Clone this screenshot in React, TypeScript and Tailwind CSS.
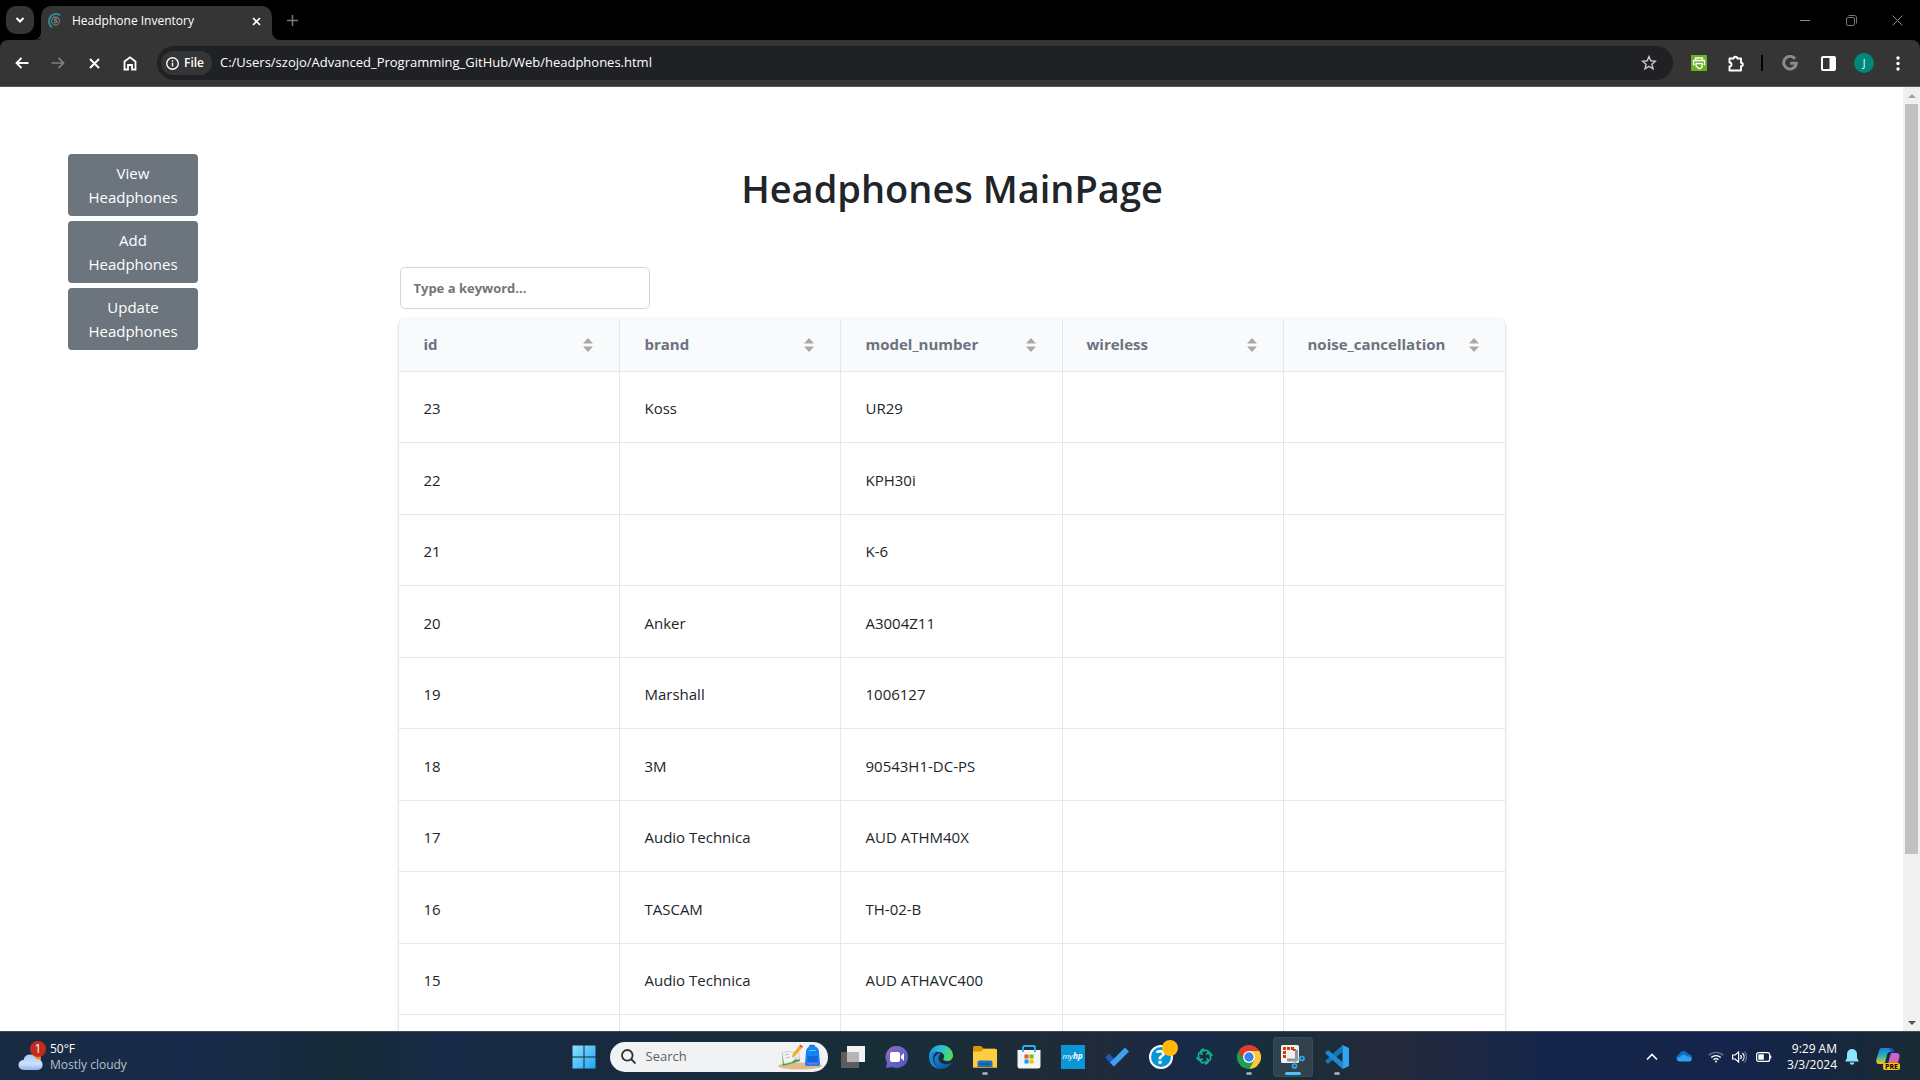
import React from "react";

type Headphone = { id: number; brand: string; model: string };

const columns = ["id", "brand", "model_number", "wireless", "noise_cancellation"];

const rows: Headphone[] = [
  { id: 23, brand: "Koss", model: "UR29" },
  { id: 22, brand: "", model: "KPH30i" },
  { id: 21, brand: "", model: "K-6" },
  { id: 20, brand: "Anker", model: "A3004Z11" },
  { id: 19, brand: "Marshall", model: "1006127" },
  { id: 18, brand: "3M", model: "90543H1-DC-PS" },
  { id: 17, brand: "Audio Technica", model: "AUD ATHM40X" },
  { id: 16, brand: "TASCAM", model: "TH-02-B" },
  { id: 15, brand: "Audio Technica", model: "AUD ATHAVC400" },
];

function TabStrip() {
  return (
    <div className="flex h-10 shrink-0 items-start bg-black pl-1.5 pt-1.5 text-white">
      <button aria-label="Search tabs" className="flex size-7 items-center justify-center rounded-[10px] bg-[#353535]">
        <svg width="10" height="8" viewBox="0 0 10 8" fill="none" stroke="#fff" strokeWidth="2"><path d="M1.5 2 5 5.5 8.500 2" /></svg>
      </button>
      <div className="flex h-[34px] items-end">
        <svg width="7" height="8" viewBox="0 0 8 8" fill="#353535"><path d="M8 0v8H0a8 8 0 0 0 8-8z" /></svg>
        <div className="flex h-full w-[231px] items-center rounded-t-[10px] bg-[#353535] pb-1 pl-1.5">
          <svg width="16" height="18" viewBox="0 0 16 18" fill="none">
            <path d="M13.500 3.300A7 7 0 1 0 5 15.300" stroke="#2d8a91" strokeWidth="2" />
            <circle cx="8.500" cy="9" r="4" stroke="#6f7476" strokeWidth="1.300" />
            <path d="M10 7.500c-1-1-3-.6-2.800.5s2.800.7 2.800 1.800-2 1.300-3 .2" stroke="#7d8285" strokeWidth="1.200" />
          </svg>
          <span className="ml-[9px] grow text-xs">Headphone Inventory</span>
          <button aria-label="Close tab" className="mr-2 flex size-4 items-center justify-center">
            <svg width="9" height="9" viewBox="0 0 9 9" stroke="#fff" strokeWidth="1.700"><path d="m1 1 7 7M8 1 1 8" /></svg>
          </button>
        </div>
        <svg width="8" height="8" viewBox="0 0 8 8" fill="#353535"><path d="M0 0v8h8a8 8 0 0 1-8-8z" /></svg>
      </div>
      <button aria-label="New tab" className="flex h-7 w-6 items-center justify-center">
        <svg width="11" height="11" viewBox="0 0 11 11" stroke="#7a7a7a" strokeWidth="1.500"><path d="M5.500 0v11M0 5.500h11" /></svg>
      </button>
      <div className="ml-auto flex h-7">
        <button aria-label="Minimize" className="flex w-[46px] items-center justify-center">
          <svg width="10" height="10" viewBox="0 0 10 10" stroke="#8a8a8a"><path d="M0 5.500h10" /></svg>
        </button>
        <button aria-label="Restore" className="flex w-[46px] items-center justify-center">
          <svg width="11" height="11" viewBox="0 0 11 11" fill="none" stroke="#777"><rect x=".5" y="2.500" width="8" height="8" rx="1.500" /><path d="M2.500.5H8.500a2 2 0 0 1 2 2V8.500" /></svg>
        </button>
        <button aria-label="Close" className="flex w-[46px] items-center justify-center">
          <svg width="11" height="11" viewBox="0 0 11 11" stroke="#8a8a8a"><path d="m.5.5 10 10M10.500.5l-10 10" /></svg>
        </button>
      </div>
    </div>
  );
}

function Toolbar() {
  return (
    <div className="bg-black">
      <div className="flex h-[47px] shrink-0 items-center rounded-t-lg border-b border-[#5a5a5a] bg-[#353535] text-white">
        <div className="flex w-[157px] shrink-0 items-center pl-1">
          <button aria-label="Back" className="flex h-8 w-9 items-center justify-center">
            <svg width="14" height="12" viewBox="0 0 14 12" fill="none" stroke="#fff" strokeWidth="1.900"><path d="M6.500.8 1.500 6l5 5.200M1.500 6h12" /></svg>
          </button>
          <button aria-label="Forward" className="flex h-8 w-9 items-center justify-center">
            <svg width="14" height="12" viewBox="0 0 14 12" fill="none" stroke="#808080" strokeWidth="1.700"><path d="M7.500.8 12.500 6l-5 5.200M12.500 6H.5" /></svg>
          </button>
          <button aria-label="Stop loading" className="flex h-8 w-9 items-center justify-center">
            <svg width="11" height="11" viewBox="0 0 11 11" stroke="#fff" strokeWidth="2"><path d="m1 1 9 9M10 1l-9 9" /></svg>
          </button>
          <button aria-label="Home" className="flex h-8 w-9 items-center justify-center">
            <svg width="14" height="15" viewBox="0 0 14 15" fill="none" stroke="#fff" strokeWidth="1.800"><path d="M1.500 5.500 7 1.300l5.500 4.200v8H9V9H5v4.500H1.500z" /></svg>
          </button>
        </div>
        <div className="flex h-[34px] grow items-center rounded-full bg-[#202124] pl-1 pr-4">
          <button className="flex h-6 items-center gap-[5px] rounded-full bg-[#353535] pl-[5px] pr-2 text-xs font-semibold">
            <svg width="13" height="13" viewBox="0 0 14 14" fill="none" stroke="#fff" strokeWidth="1.500"><circle cx="7" cy="7" r="6.200" /><path d="M7 6.200v4M7 3.500v1.600" /></svg>
            File
          </button>
          <input
            aria-label="Address"
            className="ml-2 min-w-0 grow bg-transparent text-[13px] outline-none"
            defaultValue="C:/Users/szojo/Advanced_Programming_GitHub/Web/headphones.html"
          />
          <button aria-label="Bookmark this page">
            <svg width="16" height="16" viewBox="0 0 16 16" fill="none" stroke="#c7c7c7" strokeWidth="1.400"><path d="m8 1.500 1.800 4.300 4.700.4-3.600 3 1.100 4.600L8 11.300l-4 2.500 1.100-4.600-3.600-3 4.700-.4z" /></svg>
          </button>
        </div>
        <div className="flex shrink-0 items-center pl-2">
          <button aria-label="Print extension" className="flex w-9 items-center justify-center">
            <svg width="16" height="16" viewBox="0 0 16 16" fill="none" stroke="#fff" strokeWidth="1.300"><rect width="16" height="16" fill="#6ab01f" stroke="none" /><path d="M4.500 5V3h7v2M3.500 9.500h-1v-4h11v4h-1M5 8.500h6v3.500l-1.500 1.500H8L5 11z" /></svg>
          </button>
          <button aria-label="Extensions" className="flex w-[38px] items-center justify-center">
            <svg width="17" height="17" viewBox="0 0 17 17" fill="none" stroke="#fff" strokeWidth="1.900"><path d="M1.500 3.500h4.200a1.800 1.800 0 0 1 3.600 0H13v4.200a1.800 1.800 0 0 1 0 3.600V15.500H1.500v-4a2 2 0 0 0 0-4z" strokeLinejoin="round" /></svg>
          </button>
          <div className="ml-1.5 mr-[9px] h-4 w-0.5 bg-black" />
          <button aria-label="Google" className="flex w-9 items-center justify-center">
            <svg width="16" height="16" viewBox="0 0 16 16" fill="none" stroke="#8b8b8b" strokeWidth="3"><path d="M13 3.800A6.300 6.300 0 1 0 14.300 8.300H8.200" /></svg>
          </button>
          <button aria-label="Side panel" className="flex w-10 items-center justify-center">
            <svg width="15" height="15" viewBox="0 0 15 15"><rect x="1" y="1" width="13" height="13" rx="1" fill="none" stroke="#fff" strokeWidth="2" /><path d="M8.500 1H14v13H8.500z" fill="#fff" /></svg>
          </button>
          <button aria-label="Profile" className="mx-1.5 flex size-5 items-center justify-center rounded-full bg-[#00897b] text-[10px]">J</button>
          <button aria-label="Menu" className="mr-1 flex w-9 items-center justify-center">
            <svg width="4" height="15" viewBox="0 0 4 15" fill="#fff"><circle cx="2" cy="2" r="1.700" /><circle cx="2" cy="7.500" r="1.700" /><circle cx="2" cy="13" r="1.700" /></svg>
          </button>
        </div>
      </div>
    </div>
  );
}

function SideButton({ label }: { label: string }) {
  return (
    <button className="w-full rounded bg-[#6c757d] px-3 py-[7px] text-[15px] leading-6 text-white">
      {label}
      <br />
      Headphones
    </button>
  );
}

function Page() {
  return (
    <div className="flex min-h-0 grow bg-white">
      <div className="grid min-w-0 grow grid-cols-24 overflow-hidden">
        <nav className="col-span-5 flex flex-col items-start pl-[68px] pt-[67px]">
          <div className="flex w-[130px] flex-col gap-[5px]">
            <SideButton label="View" />
            <SideButton label="Add" />
            <SideButton label="Update" />
          </div>
        </nav>
        <main className="col-span-14 px-px pl-0.5 text-[#212529]">
          <h1 className="pt-[77px] text-center text-[38px] leading-[48px] font-semibold">Headphones MainPage</h1>
          <input
            type="search"
            aria-label="Type a keyword..."
            placeholder="Type a keyword..."
            className="mt-[55px] ml-0.5 block h-[42px] w-[250px] rounded-[5px] border border-[#d2d6dc] px-3 text-[13px] font-bold outline-none placeholder:text-[#757575]"
          />
          <div className="mt-[9px] overflow-hidden rounded-t-lg border border-b-0 border-[#e5e7eb] border-t-[#f3f4f6] shadow-sm">
            <table className="w-full table-fixed border-separate border-spacing-0 text-left">
              <thead>
                <tr className="h-[53px] bg-[#f9fafb]">
                  {columns.map((name) => (
                    <th key={name} className="border-r border-b border-[#e5e7eb] px-6 pb-0.5 text-[15px] leading-6 font-bold text-[#6b7280] last:border-r-0">
                      <div className="flex items-center justify-between">
                        {name}
                        <button aria-label={"Sort by " + name} className="flex h-6 w-3.5 items-center justify-center pt-0.5">
                          <svg width="10" height="14" viewBox="0 0 10 14" fill="#a9a9a9"><path d="M5 0 10 5.500H0zM0 8.500h10L5 14z" /></svg>
                        </button>
                      </div>
                    </th>
                  ))}
                </tr>
              </thead>
              <tbody>
                {rows.map((row) => (
                  <tr key={row.id} className="h-[71px] text-[15px] leading-6 even:h-[72px]">
                    {[row.id, row.brand, row.model, "", ""].map((value, i) => (
                      <td key={i} className="border-r border-b border-[#e5e7eb] px-6 pt-0.5 last:border-r-0">{value}</td>
                    ))}
                  </tr>
                ))}
                <tr className="h-[71px]">
                  {columns.map((name) => (
                    <td key={name} className="border-r border-[#e5e7eb] last:border-r-0" />
                  ))}
                </tr>
              </tbody>
            </table>
          </div>
        </main>
      </div>
      <div className="flex w-[17px] shrink-0 flex-col items-center bg-[#f0f0f0]" role="scrollbar" aria-controls="root" aria-valuenow={0}>
        <div className="flex h-[17px] shrink-0 items-center"><svg width="8" height="4" viewBox="0 0 8 4" fill="#a0a0a0"><path d="M4 0 8 4H0z" /></svg></div>
        <div className="h-[79.5%] w-[13px] bg-[#c1c1c1]" />
        <div className="mt-auto flex h-[17px] shrink-0 items-center"><svg width="8" height="4" viewBox="0 0 8 4" fill="#505050"><path d="M0 0h8L4 4z" /></svg></div>
      </div>
    </div>
  );
}

function TaskButton({ label, open, active, children }: { label: string; open?: boolean; active?: boolean; children: React.ReactNode }) {
  return (
    <button aria-label={label} className={"relative flex size-10 items-center justify-center rounded " + (active ? "bg-white/10 ring-1 ring-white/5 ring-inset" : "")}>
      {children}
      {open && <span className="absolute bottom-0.5 h-[3px] w-1.5 rounded-full bg-[#9aa0a6]" />}
      {active && <span className="absolute bottom-0.5 h-[3px] w-4 rounded-full bg-[#4cc2ff]" />}
    </button>
  );
}

function TaskbarApps() {
  return (
    <div className="flex items-center">
      <TaskButton label="Start">
        <svg width="24" height="24" viewBox="0 0 24 24">
          <defs><linearGradient id="win" x1="0" y1="0" x2="1" y2="1" gradientUnits="objectBoundingBox"><stop stopColor="#8be3fd" /><stop offset="1" stopColor="#1ea5f5" /></linearGradient></defs>
          <path d="M.5.5h11v11H.5zM12.500.5h11v11h-11zM.5 12.500h11v11H.5zM12.500 12.500h11v11h-11z" fill="url(#win)" />
        </svg>
      </TaskButton>
      <label className="mr-[5px] ml-1.5 flex h-[30px] w-[218px] items-center rounded-full bg-[#f1f2f4] pr-1.5 pl-[11px]">
        <svg width="15" height="15" viewBox="0 0 15 15" fill="none" stroke="#2f3133" strokeWidth="1.800"><circle cx="6.300" cy="6.300" r="5.300" /><path d="m10 10 4.500 4.500" /></svg>
        <input aria-label="Search" placeholder="Search" className="ml-2.5 w-0 grow bg-transparent text-[13px] text-[#333] outline-none placeholder:text-[#5f6062]" />
        <svg width="44" height="26" viewBox="0 0 44 26">
          <ellipse cx="22" cy="22" rx="22" ry="3.500" fill="#e2b98b" />
          <path d="m4 10 8-2 2 2 6-3 2 10-17 5z" fill="#3f9d52" />
          <path d="m4 9 8-2 2 2 6-3 2 9-6 1-2 2-8 2z" fill="#f4f4f2" stroke="#b5b8b4" strokeWidth=".6" />
          <path d="m7 11 4-1m-3 4 4-1m3-1 4-2m-3 5 4-2" stroke="#aaa" strokeWidth=".8" />
          <path d="m21 2 3 2-8 9-2 .5.500-3z" fill="#f9a72b" /><path d="m21 2 1.500-1.500 2.500 2L24 4z" fill="#e84a4a" />
          <path d="M31 2.500a4 3 0 0 1 6 0" fill="none" stroke="#1367c5" strokeWidth="1.500" />
          <path d="M28 8c0-8 13-8 13 0l1 12c0 2-1 2-2 2H29c-1 0-2 0-2-2z" fill="#1684ee" />
          <path d="M29.500 12h10v6h-10z" fill="#1465d6" /><path d="M29 19.500h11" stroke="#8a62e8" strokeWidth="1.500" /><path d="M31 6.500h7" stroke="#5cc8ff" />
        </svg>
      </label>
      <div className="flex gap-1">
        <TaskButton label="Task view">
          <svg width="24" height="22" viewBox="0 0 24 22"><path d="M6 0h18v16H6z" fill="#f2f2f2" /><path d="M0 6h18v16H0z" fill="#5d5d5d" /><path d="M6 6h12v10H6z" fill="#b5b5b5" /></svg>
        </TaskButton>
        <TaskButton label="Chat">
          <svg width="24" height="24" viewBox="0 0 24 24">
            <defs><linearGradient id="chat" x1="0" y1="0" x2="1" y2="1"><stop stopColor="#9a6db8" /><stop offset=".5" stopColor="#6a62c8" /><stop offset="1" stopColor="#5553b8" /></linearGradient></defs>
            <path d="M12 1a11 11 0 1 1-4.500 21L1 23l1-5.500A11 11 0 0 1 12 1z" fill="url(#chat)" />
            <rect x="5" y="7" width="10" height="10" rx="2" fill="#fff" /><path d="m16 11 3-3v8l-3-3z" fill="#fff" />
          </svg>
        </TaskButton>
        <TaskButton label="Microsoft Edge">
          <svg width="24" height="24" viewBox="0 0 24 24">
            <defs>
              <linearGradient id="edge-top" x1="0" y1=".4" x2="1" y2=".6"><stop stopColor="#1c9be8" /><stop offset=".5" stopColor="#2bc3d2" /><stop offset="1" stopColor="#5bdc4a" /></linearGradient>
              <linearGradient id="edge-low" x1="0" y1="0" x2="1" y2="1"><stop stopColor="#1a86d9" /><stop offset="1" stopColor="#0c4f9e" /></linearGradient>
            </defs>
            <path d="M0 11C.5 4.500 5.500 0 12 0c7 0 12 5 12 10.500 0 3.500-2.500 5.500-5.500 5.500-3 0-5-1-4-2.500C16 11 14.500 7 10 7 5 7 1 9 0 13z" fill="url(#edge-top)" />
            <path d="M0 12c1-5 5.500-6 9-6-4 2-5 5-5 8 0 5 4 9 8 10C5 24 0 19 0 12z" fill="#1589dc" />
            <path d="M10.500 8C6 10 4.500 13 5.500 17c1 4 5 7 8 6.800 4-.3 7-2.800 9-5.800-5 2.500-13 1-13-5 0-2 1-3 2-4z" fill="url(#edge-low)" />
          </svg>
        </TaskButton>
        <TaskButton label="File Explorer" open>
          <svg width="24" height="22" viewBox="0 0 24 22"><path d="M0 1.500Q0 0 1.500 0H8l2.500 2.500H22V8H0z" fill="#dc9507" /><path d="M0 5.500h8l2.500-2.500H23a1 1 0 0 1 1 1V21H0z" fill="#fdcc45" /><path d="M4.500 21v-4.500a2 2 0 0 1 2-2h11a2 2 0 0 1 2 2V21z" fill="#1673c8" /><path d="M7 18h10" stroke="#0d5496" strokeWidth="1.500" /><path d="M0 21.500h24" stroke="#dc9507" /></svg>
        </TaskButton>
        <TaskButton label="Microsoft Store">
          <svg width="24" height="24" viewBox="0 0 24 24"><path d="M.5 5h23v16a2.500 2.500 0 0 1-2.500 2.500H3A2.500 2.500 0 0 1 .5 21z" fill="#f3f4f5" /><path d="M6 7V2.500A1.500 1.500 0 0 1 7.500 1h9A1.500 1.500 0 0 1 18 2.500V7" fill="none" stroke="#2cb1f2" strokeWidth="1.800" /><path d="M7.500 9.500h4v4h-4z" fill="#f25022" /><path d="M12.500 9.500h4v4h-4z" fill="#7fba00" /><path d="M7.500 14.500h4v4h-4z" fill="#00a4ef" /><path d="M12.500 14.500h4v4h-4z" fill="#ffb900" /></svg>
        </TaskButton>
        <TaskButton label="myHP">
          <span className="flex size-6 items-center justify-center bg-[#0a96d6] text-[8px] text-white italic">my<b>hp</b></span>
        </TaskButton>
        <TaskButton label="To Do">
          <svg width="24" height="20" viewBox="0 0 24 20"><path d="m0 10.500 4-4 8.500 8.500-4 4.500z" fill="#1d57b8" /><path d="M20 .5 24 4.500 9 19.500l-4-4z" fill="#3ea0ee" /></svg>
        </TaskButton>
        <TaskButton label="HP Support Assistant">
          <span className="flex size-6 items-center justify-center rounded-full border-2 border-white bg-[#0a96d6] text-xl leading-none font-bold text-white">?</span>
          <span className="absolute top-[3px] right-[3px] size-4 rounded-full bg-[#ffb90a]" />
        </TaskButton>
        <TaskButton label="Sync">
          <svg width="17" height="17" viewBox="0 0 17 17" fill="none" stroke="#12b886" strokeWidth="1.600" strokeLinecap="round">
            <path d="M7.500 1C4 2 4 5 6 6.300M7 3c4-1.500 6.500 0 6 3" />
            <path d="M7.500 1C4 2 4 5 6 6.300M7 3c4-1.500 6.500 0 6 3" transform="rotate(90 8.500 8.500)" />
            <path d="M7.500 1C4 2 4 5 6 6.300M7 3c4-1.500 6.500 0 6 3" transform="rotate(180 8.500 8.500)" />
            <path d="M7.500 1C4 2 4 5 6 6.300M7 3c4-1.500 6.500 0 6 3" transform="rotate(270 8.500 8.500)" />
          </svg>
        </TaskButton>
        <TaskButton label="Google Chrome" open>
          <svg width="24" height="24" viewBox="0 0 24 24">
            <path d="M12 6h10.400A12 12 0 0 1 12 24l5.200-9z" fill="#fcc934" /><path d="M6.800 15 1.600 6A12 12 0 0 0 12 24l5.200-9z" fill="#1e9e50" /><path d="M1.600 6A12 12 0 0 1 22.400 6H12l-5.200 9z" fill="#e33b2e" />
            <circle cx="12" cy="12" r="6" fill="#fff" /><circle cx="12" cy="12" r="4.700" fill="#3b82ec" />
          </svg>
        </TaskButton>
        <TaskButton label="Snipping Tool" active>
          <svg width="25" height="24" viewBox="0 0 25 24"><rect x="1" width="18" height="18" rx="1.500" fill="#f1f1f1" /><path d="M4.500 13V3.500h10V6" fill="none" stroke="#d83b01" strokeWidth="3" strokeDasharray="3 1" /><path d="M16.500 5v10M7 15h9" stroke="#8e9499" strokeWidth="3" /><path d="m14 18 6-5" stroke="#aaafb4" strokeWidth="2" /><circle cx="14.500" cy="21" r="2" fill="none" stroke="#29a9ea" strokeWidth="1.700" /><circle cx="22" cy="13.500" r="2" fill="none" stroke="#29a9ea" strokeWidth="1.700" /></svg>
        </TaskButton>
        <TaskButton label="Visual Studio Code" open>
          <svg width="24" height="24" viewBox="0 0 24 24"><path d="M17.500 0v7L3 19l-3-3z" fill="#1276b9" /><path d="m0 8 3-3 14.500 12v7z" fill="#1a8ad4" /><path d="M17.500 0 24 3v18l-6.500 3z" fill="#2fa6f0" /></svg>
        </TaskButton>
      </div>
    </div>
  );
}

function Taskbar() {
  return (
    <footer className="grid h-[49px] shrink-0 grid-cols-[1fr_auto_1fr] items-center border-t border-[#3c4a5c] bg-[linear-gradient(to_right,#182b42,#182a4a_10%,#162a38_18%,#172a46_23%,#172a40_30%,#172e38_45%,#202a38_57%,#182a4a_62%,#182e38_67%,#25293a_72%,#16264a_80%,#14244a_91%,#1a2a34)] pt-px text-xs text-white">
      <button className="flex items-center gap-1.5 pl-[18px] text-left leading-4">
        <span className="relative flex h-8 w-[26px] items-end">
          <svg width="26" height="20" viewBox="0 0 26 20"><defs><linearGradient id="cloud" x1="0" y1="0" x2="0" y2="1"><stop stopColor="#a5c8fa" /><stop offset=".6" stopColor="#cfe0fc" /><stop offset="1" stopColor="#8fb4ef" /></linearGradient></defs><circle cx="18" cy="5" r="5" fill="#f48b1e" /><path d="M5.500 17a5 5 0 0 1 0-10C7 0 16 0 18 6c8-1 9 11 1.500 11z" fill="url(#cloud)" /></svg>
          <span className="absolute top-0 right-[-2px] flex size-4 items-center justify-center rounded-full bg-[#c42b1c] text-xs">1</span>
        </span>
        <span>
          <span className="block">50°F</span>
          <span className="block text-[#b9c0cb]">Mostly cloudy</span>
        </span>
      </button>
      <TaskbarApps />
      <div className="flex items-center justify-end pr-5">
        <button aria-label="Hidden icons" className="mr-[18px]"><svg width="12" height="8" viewBox="0 0 12 8" fill="none" stroke="#fff" strokeWidth="1.600"><path d="m1 6.500 5-5 5 5" /></svg></button>
        <button aria-label="OneDrive" className="mr-4"><svg width="16" height="11" viewBox="0 0 16 11"><path d="M1 9a3.500 3.500 0 0 1 2-5.500C5-1 10-1 12 3c5 0 5 6 2 7z" fill="#0f6cc4" /><path d="M3.500 10.500C0 10.500 0 6 4 6c2-2.500 5-2.500 7-.5 5-1 6 5 2.500 5z" fill="#2aa3ec" /></svg></button>
        <button aria-label="Network, volume and battery" className="mr-[15px] flex items-center gap-2">
          <svg width="16" height="12" viewBox="0 0 16 12" fill="none" stroke="#fff" strokeWidth="1.400"><path d="M.7 4.300a10.500 10.500 0 0 1 14.600 0" stroke="#66748f" /><path d="M3.200 6.500a7 7 0 0 1 9.600 0M5.500 8.700a3.500 3.500 0 0 1 5 0" /><circle cx="8" cy="10.500" r="1" fill="#fff" stroke="none" /></svg>
          <svg width="16" height="14" viewBox="0 0 16 14" fill="none" stroke="#fff" strokeWidth="1.200"><path d="M.6 5v4h2.500l3.500 3V2L3.100 5zM8.500 5a3 3 0 0 1 0 4M10.500 3a6 6 0 0 1 0 8" /><path d="M12.500 1.500a8.500 8.500 0 0 1 0 11" stroke="#66748f" /></svg>
          <svg width="16" height="10" viewBox="0 0 16 10"><rect x=".6" y=".6" width="13" height="8.800" rx="2" fill="none" stroke="#fff" strokeWidth="1.200" /><rect x="2.300" y="2.300" width="5.500" height="5.400" fill="#fff" /><path d="M14.500 3.500v3" stroke="#fff" strokeWidth="1.500" /></svg>
        </button>
        <button className="mr-2 text-right leading-4">9:29 AM<br />3/3/2024</button>
        <button aria-label="Notifications" className="mr-[17px]"><svg width="14" height="16" viewBox="0 0 14 16" fill="#8fe3fd"><path d="M7 0a5 5 0 0 1 5 5v4l1.500 2.500c.3.7 0 1-.5 1H1c-.5 0-.8-.3-.5-1L2 9V5a5 5 0 0 1 5-5zM4.700 13.500h4.600a2.300 2.300 0 0 1-4.600 0z" /></svg></button>
        <button aria-label="Copilot" className="relative h-6 w-6">
          <svg width="24" height="20" viewBox="0 0 24 20"><defs><linearGradient id="cop-a" x1="0" y1="0" x2="0" y2="1"><stop stopColor="#1b7de8" /><stop offset=".5" stopColor="#2bb3b0" /><stop offset="1" stopColor="#f3c623" /></linearGradient><linearGradient id="cop-b" x1="0" y1="0" x2="0" y2="1"><stop stopColor="#b366ec" /><stop offset="1" stopColor="#f2647e" /></linearGradient></defs><path d="M6 1h9c2 0 2.500 2 3 4h-4c-2 0-2.500 1-3 3l-1.500 6c-.5 2-1 3-3 3H3c-3 0-3-3-2.500-5L3 4c.5-2 1-3 3-3z" fill="url(#cop-a)" /><path d="M13 1h2c2 0 2.500 2 3 4h-3z" fill="#174fae" /><path d="M15 6h5.500C24 6 24 9 23 12s-1.500 6-4 6h-9c2 0 2.500-2 3-5z" fill="url(#cop-b)" /></svg>
          <span className="absolute right-0 bottom-[-1px] rounded-[2px] bg-[#fdc012] px-0.5 text-[7px] leading-[7px] font-bold text-black">PRE</span>
        </button>
      </div>
    </footer>
  );
}

export default function App() {
  return (
    <div className="flex h-screen flex-col overflow-hidden font-['Open_Sans','Noto_Sans',sans-serif]">
      <TabStrip />
      <Toolbar />
      <Page />
      <Taskbar />
    </div>
  );
}
